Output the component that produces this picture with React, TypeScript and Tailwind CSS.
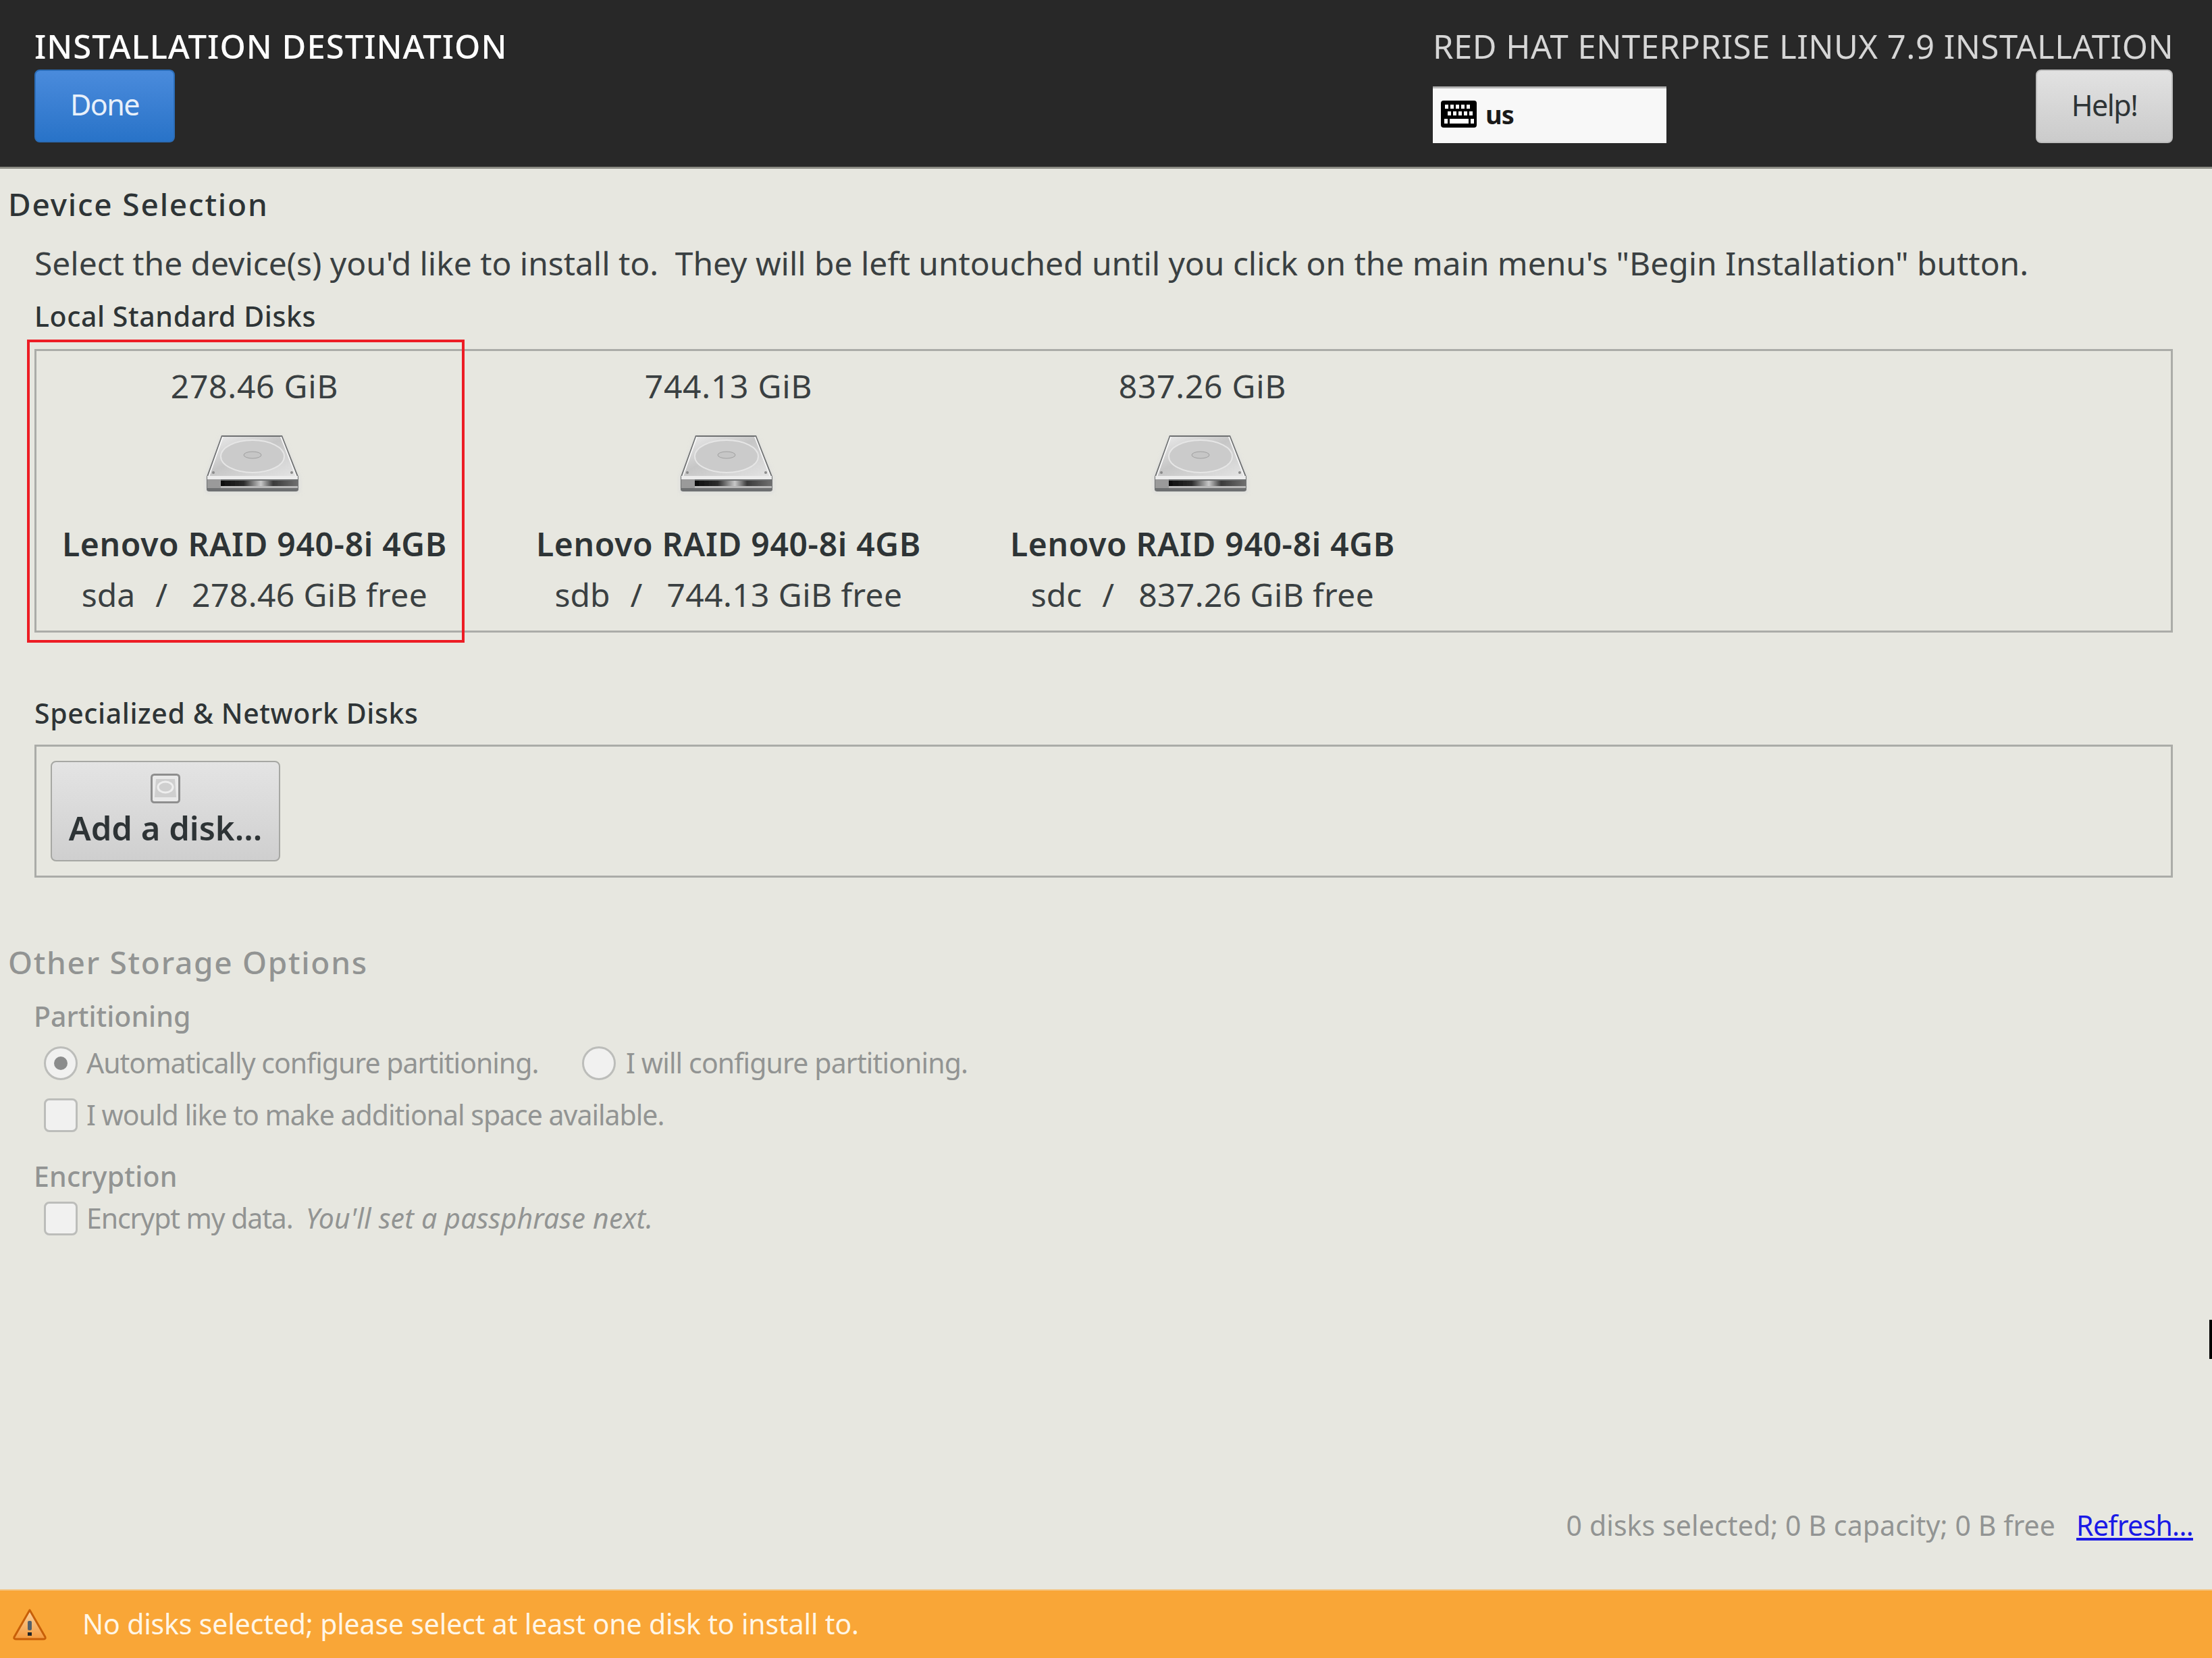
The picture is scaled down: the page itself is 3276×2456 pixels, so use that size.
import React from "react";

const disks = [
  { size: "278.46 GiB", dev: "sda", free: "278.46 GiB free" },
  { size: "744.13 GiB", dev: "sdb", free: "744.13 GiB free" },
  { size: "837.26 GiB", dev: "sdc", free: "837.26 GiB free" },
];

// drive icon, shared gradients live inside so each copy gets its own ids
const DiskIcon = ({ id }: { id: string }) => (
  <svg width="150" height="96" viewBox="0 0 150 96" className="mr-[2px]">
    <defs>
      <linearGradient id={`top-${id}`} x1="0" y1="0" x2="1" y2="1">
        <stop offset="0" stopColor="#ededed" />
        <stop offset="0.45" stopColor="#c6c6c6" />
        <stop offset="1" stopColor="#e4e4e4" />
      </linearGradient>
      <linearGradient id={`slot-${id}`} x1="0" y1="0" x2="1" y2="0">
        <stop offset="0" stopColor="#0c0c0c" />
        <stop offset="0.3" stopColor="#2c2c2c" />
        <stop offset="0.52" stopColor="#c8c8c8" />
        <stop offset="0.68" stopColor="#3a3a3a" />
        <stop offset="1" stopColor="#707070" />
      </linearGradient>
      <filter id={`soft-${id}`} x="-10%" y="-10%" width="120%" height="120%">
        <feGaussianBlur stdDeviation="0.7" />
      </filter>
      <filter id={`shade-${id}`} x="-10%" y="-10%" width="120%" height="120%">
        <feGaussianBlur stdDeviation="3" />
      </filter>
    </defs>
    <path d="M27 6 L117 6 L143 68 L143 90 L3 90 L3 68 Z" fill="#d3d4d8" opacity="0.55" filter={`url(#shade-${id})`} />
    <g filter={`url(#soft-${id})`}>
      <path d="M27 5 L117 5 L141 66 L141 85 Q141 88 137 88 L9 88 Q5 88 5 85 L5 66 Z" fill="#6e7071" />
      <path d="M29 7 L115 7 L138 66 L8 66 Z" fill={`url(#top-${id})`} />
      <path d="M29 7 L8 66 M115 7 L138 66" stroke="#f7f7f7" strokeWidth="2" fill="none" />
      <ellipse cx="73" cy="36" rx="47" ry="24" fill="#cbcbcb" stroke="#e6e6e6" strokeWidth="2" />
      <ellipse cx="73" cy="34" rx="13" ry="5" fill="#c6c6c6" stroke="#a0a0a0" strokeWidth="1" />
      <circle cx="15" cy="60" r="2" fill="#8b8b8b" />
      <circle cx="131" cy="60" r="2" fill="#8b8b8b" />
      <rect x="6" y="65" width="134" height="5" fill="#ececec" />
      <rect x="6" y="70" width="20" height="13" fill="#9a9a9a" />
      <rect x="26" y="72" width="114" height="8" fill={`url(#slot-${id})`} />
      <rect x="26" y="80" width="114" height="3" fill="#b9b9b9" />
    </g>
  </svg>
);

const KeyboardIcon = () => (
  <svg width="53" height="40" viewBox="0 0 53 40">
    <rect width="53" height="40" rx="4" fill="#000" />
    <g fill="#fff">
      {[6, 14, 22, 30, 38].map(x => <rect key={`a${x}`} x={x} y="6" width="5" height="6" />)}
      {[10, 18, 26, 34, 42].map(x => <rect key={`b${x}`} x={x} y="16" width="5" height="6" />)}
      <rect x="5" y="27" width="5" height="7" />
      <rect x="13" y="27" width="28" height="7" />
      <rect x="44" y="27" width="5" height="7" />
    </g>
  </svg>
);

const WarningIcon = () => (
  <svg width="52" height="48" viewBox="0 0 52 48">
    <defs>
      <linearGradient id="warn" x1="0" y1="0" x2="0" y2="1">
        <stop offset="0" stopColor="#fbd3a0" />
        <stop offset="1" stopColor="#f59a3c" />
      </linearGradient>
    </defs>
    <path d="M26 3 L49 43 Q50 46 46 46 L6 46 Q2 46 3 43 Z" fill="url(#warn)" stroke="#c85f08" strokeWidth="3" strokeLinejoin="round" />
    <rect x="23" y="19" width="6" height="14" rx="2" fill="#55606a" />
    <rect x="23" y="36" width="6" height="5" fill="#20262a" />
  </svg>
);

const CheckBox = () => (
  <span className="block w-[50px] h-[50px] rounded-lg border-[3px] border-[#bcbdba] bg-[#f1f1f0]" />
);

const App = () => {
  return (
    <div className="relative w-[3276px] h-[2456px] flex flex-col bg-[#e7e7e0] font-['Noto_Sans','Open_Sans',sans-serif] text-[#2e3436] overflow-hidden">
      {/* top bar */}
      <div className="h-[250px] shrink-0 flex justify-between bg-[#282828] border-b-[3px] border-[#8d8d85] pl-[51px] pr-[58px] pt-[38px]">
        <div>
          <div className="h-[60px] leading-[60px] text-[49px] font-medium text-white tracking-[1px] whitespace-nowrap">INSTALLATION DESTINATION</div>
          <button className="mt-[5px] w-[208px] h-[108px] pb-[3px] rounded-lg border-[2px] border-[#2b6db8] bg-gradient-to-b from-[#4a8bdc] to-[#2873c8] text-[43px] text-[#e8f0fa] tracking-[-1.5px]">Done</button>
        </div>
        <div className="w-[1096px]">
          <div className="h-[60px] leading-[60px] text-[49px] text-[#d6d6d6] text-right tracking-[0.5px] whitespace-nowrap">RED HAT ENTERPRISE LINUX 7.9 INSTALLATION</div>
          <div className="mt-[5px] flex items-end justify-between">
            <div className="w-[346px] h-[84px] flex items-center gap-[13px] pl-[12px] pb-[5px] bg-[#f8f8f8] border-t-[3px] border-[#b5b5b5]">
              <KeyboardIcon />
              <span className="text-[38px] font-bold text-[#1a1a1a] tracking-[-1px]">us</span>
            </div>
            <button className="w-[203px] h-[109px] pb-[3px] rounded-lg border-[2px] border-[#bdbdbd] bg-gradient-to-b from-[#e2e2e2] to-[#cbcbcb] text-[43px] text-[#2e3436] tracking-[-1.5px]">Help!</button>
          </div>
        </div>
      </div>

      {/* device selection */}
      <div className="mt-[22px] ml-[12px] h-[60px] leading-[60px] text-[46px] font-medium tracking-[1.8px]">Device Selection</div>
      <div className="mt-[28px] ml-[51px] h-[60px] leading-[60px] text-[48px] whitespace-pre text-[#3a4042] tracking-[-0.06px]">
        Select the device(s) you'd like to install to.  They will be left untouched until you click on the main menu's "Begin Installation" button.
      </div>
      <div className="mt-[18px] ml-[51px] h-[60px] leading-[60px] text-[41px] font-medium tracking-[0.6px]">Local Standard Disks</div>

      <div className="relative mt-[19px] ml-[51px] mr-[58px] h-[420px] border-[3px] border-[#abaca8] flex gap-[56px] pt-[22px]">
        {disks.map(d => (
          <div key={d.dev} className="w-[646px] flex flex-col items-center">
            <div className="h-[60px] leading-[60px] text-[48px] text-[#3a4042] tracking-[0.75px]">{d.size}</div>
            <div className="mt-[38px] h-[92px]"><DiskIcon id={d.dev} /></div>
            <div className="mt-[44px] h-[60px] leading-[60px] text-[48px] font-semibold tracking-[0.66px] whitespace-nowrap">Lenovo RAID 940-8i 4GB</div>
            <div className="mt-[15px] h-[60px] leading-[60px] text-[48px] text-[#3a4042] flex">
              <span>{d.dev}</span>
              <span className="ml-[30px]">/</span>
              <span className="ml-[36px] tracking-[0.4px]">{d.free}</span>
            </div>
          </div>
        ))}
        {/* red callout round the first disk */}
        <div className="absolute left-[-14px] top-[-17px] w-[648px] h-[449px] border-[4px] border-[#ed1c24]" />
      </div>

      {/* network disks */}
      <div className="mt-[89px] ml-[51px] h-[60px] leading-[60px] text-[41px] font-medium tracking-[0.6px]">Specialized &amp; Network Disks</div>
      <div className="mt-[17px] ml-[51px] mr-[58px] h-[197px] border-[3px] border-[#abaca8] pl-[21px] pt-[21px]">
        <button className="w-[340px] h-[149px] rounded-lg border-[2px] border-[#a6a7a3] bg-gradient-to-b from-[#e4e4e4] to-[#cfcfcf] flex flex-col items-center pt-[17px]">
          <svg width="44" height="44" viewBox="0 0 44 44">
            <rect x="1.5" y="1.5" width="41" height="41" rx="4" fill="#e9e9e9" stroke="#8e8e8e" strokeWidth="3" />
            <path d="M8 8 H36 L38 35 H6 Z" fill="#cfcfcf" />
            <ellipse cx="22" cy="20" rx="11" ry="8" fill="none" stroke="#eeeeee" strokeWidth="3" />
          </svg>
          <span className="mt-[6px] h-[60px] leading-[60px] text-[49px] font-semibold">Add a disk...</span>
        </button>
      </div>

      {/* disabled options */}
      <div className="mt-[95px] ml-[12px] h-[60px] leading-[60px] text-[46px] font-medium text-[#929493] tracking-[1.7px]">Other Storage Options</div>
      <div className="mt-[20px] ml-[50px] h-[60px] leading-[60px] text-[41px] font-medium text-[#929493]">Partitioning</div>
      <div className="mt-[15px] ml-[65px] h-[50px] flex items-center text-[#929493] text-[41px]">
        <span className="w-[50px] h-[50px] rounded-full border-[3px] border-[#bcbdba] bg-[#f1f1f0] flex items-center justify-center">
          <span className="w-[20px] h-[20px] rounded-full bg-[#8b8c8c]" />
        </span>
        <span className="ml-[13px] w-[734px] tracking-[-1px]">Automatically configure partitioning.</span>
        <span className="w-[50px] h-[50px] rounded-full border-[3px] border-[#bcbdba] bg-[#f1f1f0]" />
        <span className="ml-[15px] tracking-[-0.87px]">I will configure partitioning.</span>
      </div>
      <div className="mt-[27px] ml-[65px] h-[50px] flex items-center gap-[13px] text-[#929493] text-[41px]">
        <CheckBox />
        <span className="tracking-[-1px]">I would like to make additional space available.</span>
      </div>
      <div className="mt-[35px] ml-[50px] h-[60px] leading-[60px] text-[41px] font-medium text-[#929493] tracking-[0.2px]">Encryption</div>
      <div className="mt-[8px] ml-[65px] h-[50px] flex items-center gap-[13px] text-[#929493] text-[41px]">
        <CheckBox />
        <span className="whitespace-pre tracking-[-1.1px]">Encrypt my data.  <i className="tracking-[0.2px]">You'll set a passphrase next.</i></span>
      </div>

      {/* summary */}
      <div className="mt-auto mb-[65px] mr-[28px] h-[60px] leading-[60px] flex justify-end gap-[31px] text-[41px]">
        <span className="text-[#929493] tracking-[0.1px]">0 disks selected; 0 B capacity; 0 B free</span>
        <span className="text-[#1a1ae6] underline tracking-[-0.7px]">Refresh...</span>
      </div>

      {/* status bar */}
      <div className="h-[102px] shrink-0 flex items-center bg-[#f9a637] border-t-[2px] border-[#f2c98f] pl-[18px] text-[41px] text-[#fff6e6]">
        <WarningIcon />
        <span className="ml-[52px] tracking-[-0.16px]">No disks selected; please select at least one disk to install to.</span>
      </div>

      {/* mouse cursor poking in from the right edge */}
      <div className="absolute left-[3272px] top-[1955px] w-[4px] h-[58px] bg-black" />
    </div>
  );
};

export default App;
